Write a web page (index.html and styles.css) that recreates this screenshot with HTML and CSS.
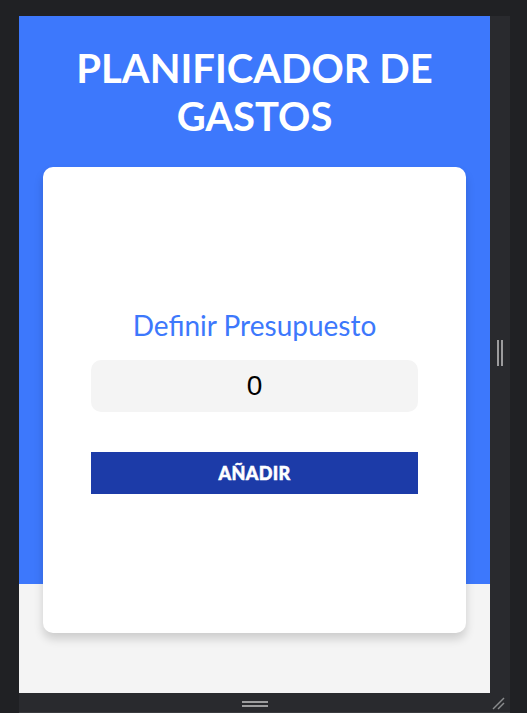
FILE: index.html
```html
<!DOCTYPE html>
<html lang="es">
<head>
<meta charset="utf-8">
<title>Planificador de Gastos</title>
<link rel="stylesheet" href="styles.css">
</head>
<body>
<div class="frame">
  <div class="viewport">
    <header class="header">
      <h1 class="title">PLANIFICADOR DE GASTOS</h1>
      <div class="card">
        <form class="form">
          <label class="label" for="budget">Definir Presupuesto</label>
          <input class="input" id="budget" type="number" value="0">
          <button class="button" type="button">AÑADIR</button>
        </form>
      </div>
    </header>
  </div>
  <div class="side-bar"><span class="v-handle"></span></div>
  <div class="bottom-bar"><span class="h-handle"></span></div>
  <div class="corner">
    <svg class="grip" width="14" height="14" viewBox="0 0 14 14">
      <line x1="2" y1="13" x2="13" y2="2" stroke="#8a8b8d" stroke-width="1.4"/>
      <line x1="7" y1="13" x2="13" y2="7" stroke="#8a8b8d" stroke-width="1.4"/>
    </svg>
  </div>
</div>
</body>
</html>
```

FILE: styles.css
```css
* { box-sizing: border-box; }
html, body { margin: 0; padding: 0; }
body {
  background: #202124;
  width: 527px;
  height: 713px;
  overflow: hidden;
  font-family: Lato, "Liberation Sans", sans-serif;
}
.frame {
  padding: 16px 0 0 19px;
  display: grid;
  grid-template-columns: 471px 20px;
  grid-template-rows: 677px 20px;
}
.viewport {
  background: #f4f4f4;
  overflow: hidden;
}
.header {
  background: #3d78fc;
  padding: 28px 24px 0;
  display: flex;
  flex-direction: column;
}
.title {
  margin: 0 0 27px;
  color: #fff;
  font-weight: 700;
  font-size: 40px;
  line-height: 48px;
  text-align: center;
}
.card {
  background: #fff;
  border-radius: 10px;
  height: 466px;
  flex: none;
  margin-bottom: -49px;
  box-shadow: 0 6px 10px rgba(0, 0, 0, 0.16);
  display: flex;
  align-items: center;
  justify-content: center;
  position: relative;
}
.form {
  width: 327px;
  display: flex;
  flex-direction: column;
  align-items: stretch;
  margin-top: 2px;
}
.label {
  color: #3d78fc;
  font-size: 28px;
  line-height: 34px;
  text-align: center;
  margin-bottom: 18px;
}
.input {
  height: 52px;
  border: none;
  border-radius: 10px;
  background: #f4f4f4;
  text-align: center;
  font-family: "Liberation Sans", Arial, sans-serif;
  font-size: 28px;
  color: #000;
  padding: 0;
  outline: none;
  -moz-appearance: textfield;
}
.input::-webkit-outer-spin-button,
.input::-webkit-inner-spin-button { -webkit-appearance: none; margin: 0; }
.button {
  margin-top: 40px;
  height: 42px;
  border: none;
  background: #1c3ba8;
  color: #fff;
  font-family: Lato, sans-serif;
  font-weight: 900;
  font-size: 18px;
  letter-spacing: 0.3px;
  -webkit-text-stroke: 0.5px #fff;
  padding: 0;
}
.side-bar {
  background: #292a2e;
  display: flex;
  align-items: center;
  justify-content: center;
}
.v-handle {
  width: 6px;
  height: 26px;
  border-left: 2px solid #9c9c9e;
  border-right: 2px solid #9c9c9e;
  margin-top: -4px;
}
.bottom-bar {
  background: #292a2e;
  display: flex;
  justify-content: center;
  padding-top: 8px;
  border-bottom: 1px solid #3a3b3e;
}
.h-handle {
  width: 26px;
  height: 6px;
  border-top: 2px solid #9c9c9e;
  border-bottom: 2px solid #9c9c9e;
}
.corner {
  background: #292a2e;
  border-bottom: 1px solid #3a3b3e;
  display: flex;
  align-items: flex-end;
  justify-content: flex-start;
  padding: 0 0 2px 1px;
}
.grip { display: block; }
```
